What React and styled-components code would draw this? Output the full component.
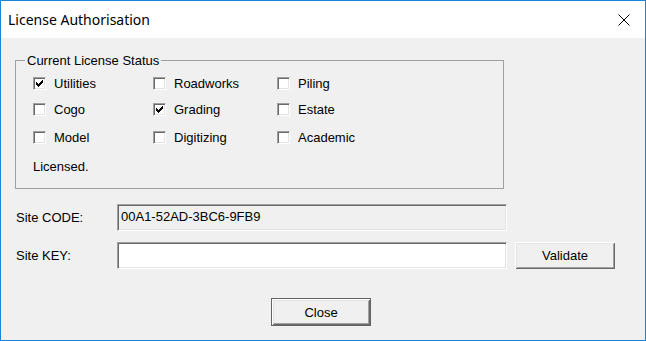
import React from 'react';
import styled, { createGlobalStyle } from 'styled-components';

const GlobalStyle = createGlobalStyle`
	html, body {
		margin: 0;
		padding: 0;
		background: #ffffff;
	}
	* {
		box-sizing: border-box;
	}
`;

const Window = styled.div`
	width: 646px;
	height: 341px;
	border: 1px solid #1883d7;
	display: flex;
	flex-direction: column;
	font-family: 'Liberation Sans', Arial, sans-serif;
	font-size: 13px;
	color: #000;
`;
const TitleBar = styled.div`
	height: 37px;
	flex: 0 0 37px;
	background: #fff;
	display: flex;
	align-items: center;
	justify-content: space-between;
	padding: 0 15px 0 7px;
`;
const Caption = styled.span`
	font-family: 'Segoe UI', 'Noto Sans', sans-serif;
	font-size: 14px;
	color: #000;
`;
const Body = styled.div`
	flex: 1;
	background: #f0f0f0;
	padding: 22px 14px 0;
	display: flex;
	flex-direction: column;
`;
const Group = styled.div`
	position: relative;
	width: 489px;
	height: 129px;
	border: 1px solid #a0a0a0;
	padding: 16px 0 0 17px;
`;
const Legend = styled.span`
	position: absolute;
	top: -8px;
	left: 9px;
	padding: 0 2px;
	background: #f0f0f0;
	line-height: 15px;
`;
const Grid = styled.div`
	display: grid;
	grid-template-columns: 120px 124px auto;
	grid-template-rows: 26px 28px 13px;
	align-items: start;
`;
const Option = styled.label`
	display: flex;
	align-items: center;
	height: 13px;
	line-height: 13px;
	gap: 8px;
`;
const Box = styled.span`
	width: 13px;
	height: 13px;
	flex: 0 0 13px;
	background: #fff;
	border-top: 1px solid #a0a0a0;
	border-left: 1px solid #a0a0a0;
	border-right: 1px solid #fff;
	border-bottom: 1px solid #fff;
	box-shadow: inset 1px 1px 0 #696969, inset -1px -1px 0 #e3e3e3;
	display: flex;
	align-items: center;
	justify-content: center;
`;
const Status = styled.div`
	margin-top: 15px;
	line-height: 15px;
`;
const FieldRow = styled.div`
	display: flex;
	align-items: center;
	margin-top: ${(p) => p.gap}px;
	height: 27px;
`;
const FieldLabel = styled.span`
	width: 102px;
	padding-left: 1px;
`;
const Field = styled.div`
	width: 390px;
	height: 27px;
	background: ${(p) => (p.readOnly ? '#f0f0f0' : '#fff')};
	border-top: 1px solid #a0a0a0;
	border-left: 1px solid #a0a0a0;
	border-right: 1px solid #fff;
	border-bottom: 1px solid #fff;
	box-shadow: inset 1px 1px 0 #696969, inset -1px -1px 0 #e3e3e3;
	padding: 4px 3px 0;
	line-height: 15px;
`;
const Button = styled.button`
	width: 100px;
	height: ${(p) => (p.primary ? 28 : 27)}px;
	margin-left: ${(p) => p.offset || 0}px;
	padding: 0;
	font-family: 'Liberation Sans', Arial, sans-serif;
	font-size: 13px;
	color: #000;
	background: #f0f0f0;
	border: ${(p) => (p.primary ? '1px solid #646464' : 'none')};
	box-shadow: inset 1px 1px 0 #fff, inset -1px -1px 0 #696969,
		inset 2px 2px 0 #e3e3e3, inset -2px -2px 0 #a0a0a0;
`;
const Footer = styled.div`
	display: flex;
	justify-content: center;
	padding-right: 4px;
	margin-top: 29px;
`;

const Check = () => (
	<svg width="7" height="7" viewBox="0 0 7 7" shapeRendering="crispEdges">
		<path
			fill="#000"
			d="M0 2h1v3H0z M1 3h1v3H1z M2 4h1v3H2z M3 3h1v3H3z M4 2h1v3H4z M5 1h1v3H5z M6 0h1v3H6z"
		/>
	</svg>
);

const CloseIcon = () => (
	<svg width="12" height="12" viewBox="0 0 12 12">
		<path d="M0.5 0.5L11.5 11.5M11.5 0.5L0.5 11.5" stroke="#000" strokeWidth="1" />
	</svg>
);

const modules = [
	{ name: 'Utilities', on: true },
	{ name: 'Roadworks' },
	{ name: 'Piling' },
	{ name: 'Cogo' },
	{ name: 'Grading', on: true },
	{ name: 'Estate' },
	{ name: 'Model' },
	{ name: 'Digitizing' },
	{ name: 'Academic' },
];

export default function App() {
	return (
		<Window>
			<GlobalStyle />
			<TitleBar>
				<Caption>License Authorisation</Caption>
				<CloseIcon />
			</TitleBar>
			<Body>
				<Group>
					<Legend>Current License Status</Legend>
					<Grid>
						{modules.map((m) => (
							<Option key={m.name}>
								<Box>{m.on && <Check />}</Box>
								{m.name}
							</Option>
						))}
					</Grid>
					<Status>Licensed.</Status>
				</Group>
				<FieldRow gap={15}>
					<FieldLabel>Site CODE:</FieldLabel>
					<Field readOnly>00A1-52AD-3BC6-9FB9</Field>
				</FieldRow>
				<FieldRow gap={11}>
					<FieldLabel>Site KEY:</FieldLabel>
					<Field />
					<Button offset={8}>Validate</Button>
				</FieldRow>
				<Footer>
					<Button primary>Close</Button>
				</Footer>
			</Body>
		</Window>
	);
}
